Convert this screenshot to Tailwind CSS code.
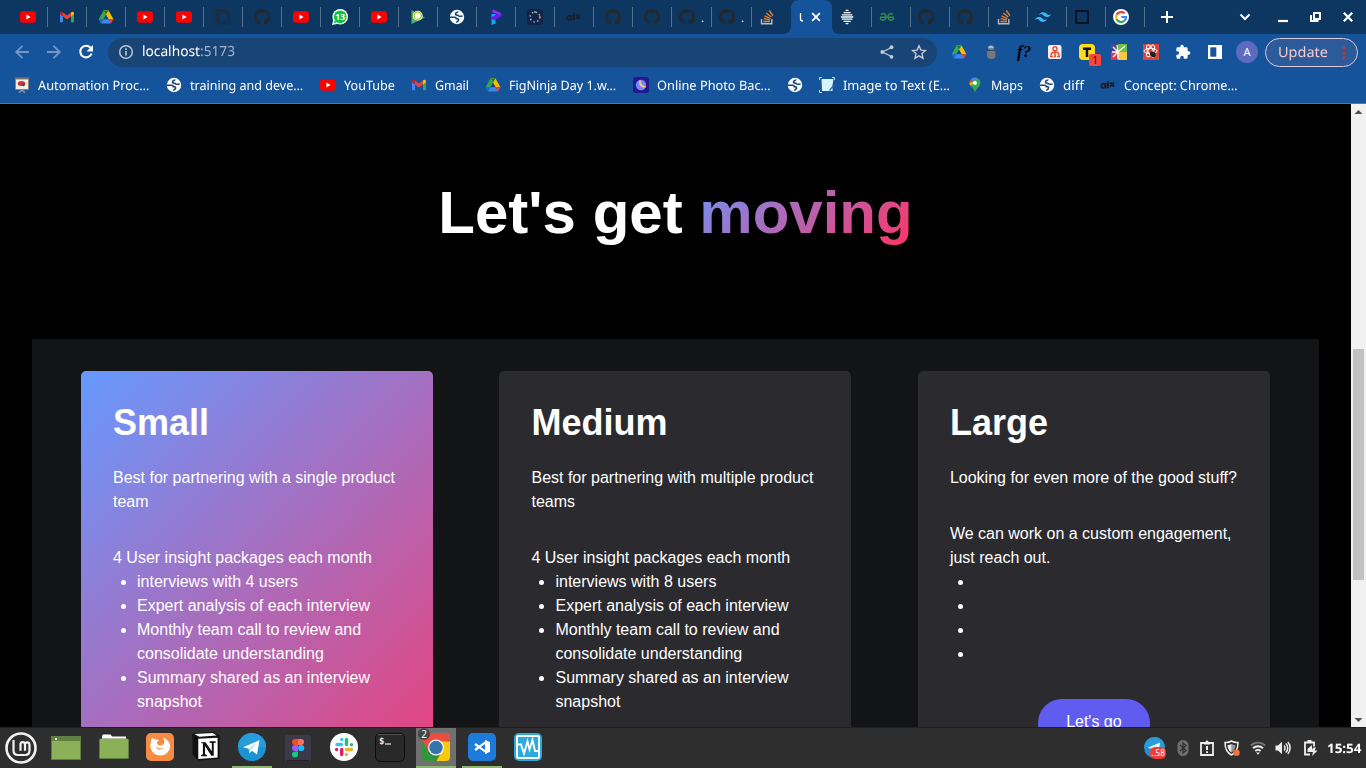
<!DOCTYPE html>
<html lang="en">
<head>
<meta charset="utf-8">
<title>Desktop</title>
<script src="https://cdn.jsdelivr.net/npm/@tailwindcss/browser@4"></script>
</head>
<body class="w-[1366px] h-[768px] overflow-hidden bg-black text-white font-['Liberation_Sans',Arial,sans-serif]">

<svg class="hidden">
  <symbol id="yt" viewBox="0 0 16 16"><rect y="2.2" width="16" height="11.6" rx="3" fill="#f00"/><path d="M6.4 5.6v4.8L10.6 8z" fill="#fff"/></symbol>
  <symbol id="gmail" viewBox="0 0 16 16"><path d="M1 4.500v8.300h3V7z" fill="#4285f4"/><path d="M1 12.800V4h3v9.300H1.500a.5.5 0 0 1-.5-.5z" fill="#4285f4"/><path d="M12 13.300h2.500a.5.5 0 0 0 .5-.5V4h-3z" fill="#34a853"/><path d="M4 3.500l4 3 4-3v4L8 10.500l-4-3z" fill="#ea4335"/><path d="M1 4.300c0-1.700 1.700-2 3-.8v4L1 5.300z" fill="#c5221f"/><path d="M15 4.300c0-1.700-1.700-2-3-.8v4l3-2.200z" fill="#fbbc04"/></symbol>
  <symbol id="drive" viewBox="0 0 16 16"><path d="M5.500 1.500h5L5.600 10 3 14.200.7 10.200z" fill="#34a853"/><path d="M5.500 1.500h5l5 8.700h-5z" fill="#fbbc04"/><path d="M5.500 1.500h5L8 5.700z" fill="#188038"/><path d="M.7 10.200h4.900L3 14.500z" fill="#1967d2"/><path d="M5.600 10.200h5l2.400 4.300H3z" fill="#4285f4"/><path d="M10.600 10.200h4.900L13 14.500z" fill="#ea4335"/><path d="M8 5.800l2.500 4.300h-5z" fill="#14467e"/></symbol>
  <symbol id="gh" viewBox="0 0 16 16"><path fill="#24292f" d="M8 0C3.580 0 0 3.580 0 8c0 3.540 2.290 6.530 5.470 7.590.4.070.550-.170.550-.380 0-.190-.010-.820-.010-1.490-2.010.370-2.530-.490-2.690-.940-.090-.230-.480-.940-.820-1.130-.280-.150-.680-.520-.010-.530.630-.010 1.080.580 1.230.820.720 1.210 1.870.870 2.330.660.070-.520.280-.870.510-1.070-1.780-.200-3.640-.890-3.640-3.950 0-.870.310-1.590.820-2.150-.080-.200-.360-1.020.080-2.120 0 0 .670-.210 2.200.820.640-.180 1.320-.270 2-.270s1.360.090 2 .270c1.530-1.040 2.200-.820 2.200-.820.440 1.100.160 1.920.080 2.120.510.560.820 1.270.820 2.150 0 3.070-1.870 3.750-3.650 3.950.290.250.540.730.540 1.480 0 1.070-.010 1.930-.010 2.200 0 .210.150.460.550.380A8.010 8.010 0 0 0 16 8c0-4.420-3.580-8-8-8z"/></symbol>
  <symbol id="globe" viewBox="0 0 16 16"><circle cx="8" cy="8" r="7.200" fill="#fff"/><path d="M1 8.200h4.800c1 0 1.500.8 1.500 1.600h1.500c1 .2 1 1.700.2 2.200-1 .3-1.300.8-1.300 1.800M9 2.600c-.3 1-2.600 1-2.600 2.300 0 1.200 1.400 1.300 2.600 1.500.8 1.100 3.200.9 4.600.6" fill="none" stroke="#15457c" stroke-width="1.600"/></symbol>
  <symbol id="so" viewBox="0 0 16 16"><path d="M2.500 10v4.800h10.300V10" fill="none" stroke="#bcbbbb" stroke-width="1.400"/><path d="M4.500 12.500h6.500M4.700 9.700l6.300 1.200M5.500 6.800l5.900 2.700M7.300 4l5 4.100M10.200 1.500l3.800 5.200" stroke="#f48024" stroke-width="1.300" fill="none"/></symbol>
  <symbol id="box" viewBox="0 0 16 16"><path d="M1.500 1.500h11l2 2v11h-11l-2-2z" fill="none" stroke="#222a35" stroke-width="1.500"/><path d="M4 4h8.500v8.500H4z" fill="#0d3660" stroke="#222a35" stroke-width="1.200"/></symbol>
  <symbol id="tg" viewBox="0 0 28 28"><circle cx="14" cy="14" r="14" fill="#1c94d2"/><path d="M0 14a14 14 0 0 1 28 0z" fill="#289ddb"/><path d="M5 14.200L21.500 7.300 19 21.500l-5-3.700-2.500 2.400-.8-4.500z" fill="#fff"/><path d="M10.700 15.700L19 9.600l-6 7-1.500 3.600z" fill="#b7d8ec"/></symbol>
</svg>

<div class="flex flex-col w-full h-full">

  <!-- tab strip -->
  <div class="flex h-[34px] shrink-0 bg-[#0d3660] pl-[9px] items-center font-['Noto_Sans',sans-serif]">
    <div class="flex w-[39px] h-5 items-center justify-center border-r border-[#56728f]"><svg class="size-4"><use href="#yt"/></svg></div>
    <div class="flex w-[39px] h-5 items-center justify-center border-r border-[#56728f]"><svg class="size-4"><use href="#gmail"/></svg></div>
    <div class="flex w-[39px] h-5 items-center justify-center border-r border-[#56728f]"><svg class="size-4"><use href="#drive"/></svg></div>
    <div class="flex w-[39px] h-5 items-center justify-center border-r border-[#56728f]"><svg class="size-4"><use href="#yt"/></svg></div>
    <div class="flex w-[39px] h-5 items-center justify-center border-r border-[#56728f]"><svg class="size-4"><use href="#yt"/></svg></div>
    <div class="flex w-[39px] h-5 items-center justify-center border-r border-[#56728f]"><svg class="size-4"><use href="#box"/></svg></div>
    <div class="flex w-[39px] h-5 items-center justify-center border-r border-[#56728f]"><svg class="size-4"><use href="#gh"/></svg></div>
    <div class="flex w-[39px] h-5 items-center justify-center border-r border-[#56728f]"><svg class="size-4"><use href="#yt"/></svg></div>
    <div class="flex w-[39px] h-5 items-center justify-center border-r border-[#56728f]">
      <svg class="size-4" viewBox="0 0 16 16"><circle cx="8.200" cy="7.800" r="7.800" fill="#fff"/><path d="M0 16l1.500-6 4.500 4.800z" fill="#fff"/><circle cx="8.200" cy="7.800" r="6.400" fill="#09c53f"/><path d="M1.700 14.300l.9-3 2.200 2.200z" fill="#09c53f"/><text x="8.200" y="11" text-anchor="middle" font-size="8.500" font-weight="700" fill="#fff">13</text></svg></div>
    <div class="flex w-[39px] h-5 items-center justify-center border-r border-[#56728f]"><svg class="size-4"><use href="#yt"/></svg></div>
    <div class="flex w-[39px] h-5 items-center justify-center border-r border-[#56728f]">
      <svg class="size-4" viewBox="0 0 16 16"><path d="M1.500 1l13.500 7.500L1.500 15z" fill="#4fae74"/><path d="M1.500 15l6-3.200L15 8.500z" fill="#1e8c50"/><circle cx="7.700" cy="6.700" r="3.600" fill="#7db53c" stroke="#fff" stroke-width="2.600"/><circle cx="7.700" cy="6.700" r="3.600" fill="#fff" stroke="#b4cf2b" stroke-width="1.500"/></svg></div>
    <div class="flex w-[39px] h-5 items-center justify-center border-r border-[#56728f]"><svg class="size-4"><use href="#globe"/></svg></div>
    <div class="flex w-[39px] h-5 items-center justify-center border-r border-[#56728f]">
      <svg class="size-4" viewBox="0 0 16 16"><path d="M3.500 5h4v9.500l-4 1.500z" fill="#12a6ef"/><path d="M5 .5l8.500 3.700v3L5 11.500 3.500 8l5.500-2.500L4 3.300z" fill="#6a1cf0"/><path d="M5 .5l8.500 3.700-2 1.600L4 3.300z" fill="#8a2df5"/></svg></div>
    <div class="flex w-[39px] h-5 items-center justify-center border-r border-[#56728f]">
      <svg class="size-4" viewBox="0 0 16 16"><rect width="16" height="16" rx="3" fill="#14234b"/><circle cx="8" cy="8" r="4.900" fill="none" stroke="#a9b9cd" stroke-width="1.500" stroke-dasharray="1.500 2.350"/><circle cx="8" cy="3" r="1" fill="#7bbf3b"/><circle cx="12.800" cy="8" r="1" fill="#e48544"/></svg></div>
    <div class="flex w-[39px] h-5 items-center justify-center border-r border-[#56728f]">
      <svg class="size-4" viewBox="0 0 16 16"><path d="M5.500 6v5.300M8 4v7.300M10 5.500l4 4M14 5.500L10 9.500" stroke="#1b2028" stroke-width="1.900" fill="none"/><circle cx="3.300" cy="8.800" r="2" stroke="#1b2028" stroke-width="1.700" fill="none"/></svg></div>
    <div class="flex w-[39px] h-5 items-center justify-center border-r border-[#56728f]"><svg class="size-4"><use href="#gh"/></svg></div>
    <div class="flex w-[39px] h-5 items-center justify-center border-r border-[#56728f]"><svg class="size-4"><use href="#gh"/></svg></div>
    <div class="flex w-10 h-5 items-center pl-[7px] gap-[6px] border-r border-[#56728f]"><svg class="size-4"><use href="#gh"/></svg><span class="text-[11px] leading-5 pt-0.5">.</span></div>
    <div class="flex w-10 h-5 items-center pl-[7px] gap-[6px] border-r border-[#56728f]"><svg class="size-4"><use href="#gh"/></svg><span class="text-[11px] leading-5 pt-0.5">.</span></div>
    <div class="flex w-[31px] h-5 items-center pl-[7px]"><svg class="size-4"><use href="#so"/></svg></div>
    <div class="flex w-[57px] h-[34px]">
      <svg class="w-[57px] h-[34px]" viewBox="0 0 57 34"><path d="M0 34c5 0 8-3 8-8V8c0-5 3-8 8-8h25c5 0 8 3 8 8v18c0 5 3 8 8 8z" fill="#15539a"/><path d="M17.500 13v6c0 1.500.8 2 2.500 2" stroke="#fff" stroke-width="1.300" fill="none"/><path d="M29.200 13.200l7.600 7.600M36.800 13.200l-7.600 7.600" stroke="#fff" stroke-width="1.900"/></svg>
    </div>
    <div class="flex w-8 h-5 items-center border-r border-[#56728f]">
      <svg class="w-[15px] h-4" viewBox="0 0 16 16"><path d="M6.500 1h2M4.300 3.300h6.500M2.500 5.700h10.200M1.500 8h12.200M2.500 10.300h10.200M4.300 12.700h6.500M6.500 15h2" stroke="#fff" stroke-width="1.400" stroke-linecap="round"/></svg></div>
    <div class="flex w-[39px] h-5 items-center pl-[7px] border-r border-[#56728f]">
      <svg class="size-4" viewBox="0 0 16 16"><path d="M1 8.200h14M2.200 5.500c2-2.300 5 0 4.800 2.500-.2 4-5 4.300-5.800.8M13.800 5.500c-2-2.300-5 0-4.800 2.500.2 4 5 4.300 5.800.8" stroke="#2f8d46" stroke-width="1.400" fill="none"/></svg></div>
    <div class="flex w-[39px] h-5 items-center pl-[7px] border-r border-[#56728f]"><svg class="size-4"><use href="#gh"/></svg></div>
    <div class="flex w-[39px] h-5 items-center pl-[7px] border-r border-[#56728f]"><svg class="size-4"><use href="#gh"/></svg></div>
    <div class="flex w-[39px] h-5 items-center pl-[7px] border-r border-[#56728f]"><svg class="size-4"><use href="#so"/></svg></div>
    <div class="flex w-[39px] h-5 items-center pl-[7px] border-r border-[#56728f]">
      <svg class="size-4" viewBox="0 0 24 24"><path fill="#38bdf8" d="M12 4.800c-3.200 0-5.200 1.600-6 4.800 1.200-1.600 2.600-2.200 4.200-1.800.9.200 1.600.9 2.300 1.700 1.200 1.200 2.600 2.500 5.500 2.500 3.200 0 5.200-1.600 6-4.800-1.200 1.600-2.600 2.200-4.200 1.800-.9-.2-1.600-.9-2.300-1.700C16.300 6.100 14.900 4.800 12 4.800zM6 12c-3.200 0-5.200 1.600-6 4.800 1.200-1.600 2.600-2.200 4.200-1.800.9.200 1.600.9 2.300 1.700 1.200 1.200 2.600 2.500 5.500 2.500 3.200 0 5.200-1.600 6-4.800-1.200 1.600-2.600 2.200-4.200 1.800-.9-.2-1.600-.9-2.300-1.700C10.300 13.300 8.900 12 6 12z"/></svg></div>
    <div class="flex w-[39px] h-5 items-center pl-[7px] border-r border-[#56728f]">
      <svg class="size-4" viewBox="0 0 16 16"><rect x="2" y="2" width="12" height="12" fill="none" stroke="#030a12" stroke-width="1.500"/></svg></div>
    <div class="flex w-[39px] h-5 items-center pl-[7px] border-r border-[#56728f]">
      <svg class="size-4" viewBox="0 0 16 16"><circle cx="8" cy="8" r="8" fill="#fff"/><g fill="none" stroke-width="2.200"><path d="M11.600 4.400A5 5 0 0 0 3.600 5.800" stroke="#ea4335"/><path d="M3.700 5.700a5 5 0 0 0 0 4.700" stroke="#fbbc05"/><path d="M3.600 10.300a5 5 0 0 0 7.600 1.600" stroke="#34a853"/><path d="M11.100 12A5 5 0 0 0 13 8H8.300" stroke="#4285f4"/></g></svg></div>
    <svg class="w-[221px] h-[34px]" viewBox="0 0 221 34"><g stroke="#fff" fill="none"><path d="M22 11v12M16 17h12" stroke-width="2"/><path d="M95.500 14.500l4.500 4.500 4.500-4.500" stroke-width="2"/><path d="M133 21h10" stroke-width="2.200"/><rect x="169" y="13" width="6" height="6" stroke-width="2"/><path d="M166 15v6h7.500" stroke-width="2"/><path d="M198.800 12.800l8.400 8.400M207.200 12.800l-8.400 8.400" stroke-width="2.200"/></g></svg>
  </div>

  <!-- toolbar -->
  <div class="flex h-[37px] shrink-0 bg-[#15539a] items-center font-['Noto_Sans',sans-serif]">
    <svg class="w-[108px] h-[37px] shrink-0" viewBox="0 0 108 37"><g fill="none" stroke-width="1.800"><path d="M29 18H16.500M22.500 11.800L16.200 18l6.300 6.200M47 18h12.500M53.500 11.800L59.800 18l-6.300 6.200" stroke="#7299c4"/><path d="M90.500 13.800A5.800 5.800 0 1 0 91.600 19.500" stroke="#fff" stroke-width="2.100"/></g><path d="M93 11v6.500h-6.500z" fill="#fff"/></svg>
    <div class="flex w-[829px] h-[29px] rounded-full bg-[#194576] items-center pl-[10px] pr-[10px] pb-px">
      <svg class="size-4 shrink-0" viewBox="0 0 16 16"><circle cx="8" cy="8" r="6.300" fill="none" stroke="#bac5d2" stroke-width="1.500"/><path d="M8 7v4.500M8 4.300v1.600" stroke="#bac5d2" stroke-width="1.600"/></svg>
      <div class="ml-2 text-[14px] leading-5 whitespace-nowrap origin-left scale-x-[.98] [text-rendering:geometricPrecision]">localhost<span class="text-[#a3b5c8]">:5173</span></div>
      <svg class="size-4 ml-auto" viewBox="0 0 16 16"><path d="M12.500 3.500L3.500 8l9 4.500" fill="none" stroke="#c3cbd5" stroke-width="1.300"/><circle cx="12.500" cy="3.200" r="1.900" fill="#c3cbd5"/><circle cx="3.300" cy="8" r="1.900" fill="#c3cbd5"/><circle cx="12.500" cy="12.800" r="1.900" fill="#c3cbd5"/></svg>
      <svg class="size-4 ml-4" viewBox="0 0 16 16"><path d="M8 1.800l1.900 4.300 4.600.4-3.500 3.100 1 4.600L8 11.800l-4 2.400 1-4.600-3.500-3.100 4.600-.4z" fill="none" stroke="#c3cbd5" stroke-width="1.400"/></svg>
    </div>
    <div class="flex items-center gap-4 ml-[14px] pb-px">
      <svg class="size-4"><use href="#drive"/></svg>
      <svg class="size-4" viewBox="0 0 16 16"><path d="M4 5L2.500 3M12 5l1.500-2M3.500 9H1.500M12.500 9h2M4 13l-1.500 1.500M12 13l1.500 1.500" stroke="#34516f"/><rect x="4" y="5" width="8.500" height="10" rx="4" fill="#74797f"/><path d="M5 4.500a3 3 0 0 1 6 0z" fill="#b5b9bd"/><path d="M4 6.500h8.500" stroke="#3f4a57"/></svg>
      <div class="w-4 pl-0.5 text-[17px] leading-4 font-bold italic text-black font-['Liberation_Serif',serif] whitespace-nowrap">f?</div>
      <svg class="size-4" viewBox="0 0 16 16"><rect x="1" y="1" width="13.500" height="14" rx="2" fill="#f5f0ee"/><circle cx="8" cy="4.800" r="2" fill="none" stroke="#e94b35" stroke-width="1.400"/><path d="M8 7v5M4 11.500c0-3 1.500-3.500 4-3.500s4 .5 4 3.500M3 12.500h3M7 12.500h2M10 12.500h3" stroke="#e94b35" stroke-width="1.500" fill="none"/></svg>
      <div class="relative size-4"><svg class="size-4" viewBox="0 0 16 16"><rect width="16" height="16" rx="4" fill="#fddc1c"/><path d="M4 4.700h8M8 4.700V13" stroke="#101010" stroke-width="2.500"/></svg><span class="absolute left-[10px] top-[10px] w-3 h-3 rounded-[2px] bg-[#f9453c] text-[10px] leading-3 text-center text-[#1f1010]">1</span></div>
      <svg class="size-4" viewBox="0 0 16 16"><path d="M0 0h7v8H0z" fill="#583e91"/><path d="M7 0h9v8H7z" fill="#70be44"/><path d="M0 8h7v8H0z" fill="#e0345a"/><path d="M7 8h9v8H7z" fill="#f6c945"/><path d="M7 8L2 3M7 8L6 1M7 8l7-6M7 8H1M7 8l-5 5M7 8v7" stroke="#fff" stroke-width="1.300"/></svg>
      <svg class="size-4" viewBox="0 0 16 16"><rect width="16" height="16" fill="#d8453b"/><g fill="none" stroke="#fff" stroke-width="1"><ellipse cx="7.500" cy="7" rx="6.500" ry="2.600"/><ellipse cx="7.500" cy="7" rx="6.500" ry="2.600" transform="rotate(60 7.500 7)"/><ellipse cx="7.500" cy="7" rx="6.500" ry="2.600" transform="rotate(120 7.500 7)"/></g><path d="M7 8.500l2-1 2.500.5 1.500 2.500-1 2.500H9l-2-1.800z" fill="#222"/></svg>
      <svg class="size-4" viewBox="0 0 24 24"><path fill="#fff" d="M20.500 11H19V7a2 2 0 0 0-2-2h-4V3.500a2.500 2.500 0 0 0-5 0V5H4a2 2 0 0 0-2 2v3.800h1.500a2.700 2.700 0 0 1 0 5.400H2V20a2 2 0 0 0 2 2h3.800v-1.500a2.700 2.700 0 0 1 5.400 0V22H17a2 2 0 0 0 2-2v-4h1.500a2.500 2.500 0 0 0 0-5z"/></svg>
      <svg class="size-4" viewBox="0 0 16 16"><rect x="1" y="1" width="14" height="14" fill="#fff"/><path d="M3.300 3.300h6v9.400h-6z" fill="#15539a"/></svg>
    </div>
    <div class="ml-[13px] mb-px size-[22px] rounded-full bg-[#5c6bc0] text-[11px] leading-[22px] text-center">A</div>
    <div class="flex ml-[7px] w-[93px] h-[29px] rounded-full border border-[#dcc9d6] bg-[#2b5b9b] items-center pl-3">
      <div class="w-[50px] text-[14px] leading-5 text-[#f6c9c8] whitespace-nowrap origin-left scale-x-[1.035] [text-rendering:geometricPrecision]">Update</div>
      <svg class="w-1 h-4 ml-[14px]" viewBox="0 0 4 16"><g fill="#d93025"><circle cx="2" cy="3" r="1.500"/><circle cx="2" cy="8" r="1.500"/><circle cx="2" cy="13" r="1.500"/></g></svg>
    </div>
  </div>

  <!-- bookmarks -->
  <div class="flex h-[33px] shrink-0 bg-[#15539a] border-b border-[#4779b0] items-center pl-[14px] pb-1 gap-4 text-[13px] leading-5 whitespace-nowrap font-['Noto_Sans',sans-serif] [text-rendering:geometricPrecision]">
    <div class="flex gap-2 items-center"><svg class="size-4" viewBox="0 0 16 16"><path d="M8 13l-3 2.800M8 13l3 2.800" stroke="#a39a8e" stroke-width="1.300"/><path d="M.5 1h15" stroke="#665f5c" stroke-width="2"/><rect x="1.500" y="2" width="13" height="10.500" fill="#f2efed" stroke="#8d837b"/><ellipse cx="7.500" cy="6.500" rx="3.800" ry="2.500" fill="#d53333"/><path d="M7.500 6.500l4 1-2 2z" fill="#444"/></svg><div class="w-28 origin-left scale-x-[.985]">Automation Proc…</div></div>
    <div class="flex gap-2 items-center"><svg class="size-4"><use href="#globe"/></svg><div class="w-[114px] origin-left scale-x-[.966]">training and deve…</div></div>
    <div class="flex gap-2 items-center"><svg class="size-4"><use href="#yt"/></svg><div class="w-[51px] origin-left scale-x-[.97]">YouTube</div></div>
    <div class="flex gap-2 items-center"><svg class="size-4"><use href="#gmail"/></svg><div class="w-[34px] origin-left scale-x-[.955]">Gmail</div></div>
    <div class="flex gap-2 items-center"><svg class="size-4"><use href="#drive"/></svg><div class="w-[108px] origin-left scale-x-[.965]">FigNinja Day 1.w…</div></div>
    <div class="flex gap-2 items-center"><svg class="size-4" viewBox="0 0 16 16"><rect width="16" height="16" rx="3" fill="#23198e"/><circle cx="8" cy="8" r="5.200" fill="#7a86f5"/><path d="M7 3.500c0 3 2 5.500 5.500 6.500C9 10.800 5.500 8 7 3.500z" fill="#ffcf7a" stroke="#ffcf7a"/></svg><div class="w-[114px] origin-left scale-x-[.983]">Online Photo Bac…</div></div>
    <svg class="size-4"><use href="#globe"/></svg>
    <div class="flex gap-2 items-center"><svg class="size-4" viewBox="0 0 16 16"><path d="M.5 3V.5H3M13 .5h2.500V3M.5 13v2.500H3" stroke="#b9d9f4" fill="none"/><path d="M2.500 2H14.500L13.500 8v6H3z" fill="#d7f3fd"/><path d="M10 13l4.500-5.500 1 1L11 14z" fill="#1e6fb8"/></svg><div class="w-[108px] origin-left scale-x-[.988]">Image to Text (E…</div></div>
    <div class="flex gap-2 items-center"><svg class="size-4" viewBox="0 0 16 16"><path d="M8 .5a5.500 5.500 0 0 0-5.500 5.700C2.700 9.500 7 11 8 15.500 9 11 13.300 9.500 13.500 6.200A5.500 5.500 0 0 0 8 .5z" fill="#34a853"/><path d="M8 .5a5.500 5.500 0 0 0-4.300 2L6.300 4.800 10 .9A5 5 0 0 0 8 .5z" fill="#4285f4"/><path d="M3.700 2.500a5.500 5.500 0 0 0-1.200 3.400L6.200 4.700z" fill="#ea4335"/><path d="M2.500 6c.1 1 .5 2 1.200 2.800L9.500 2.500 6.200 4.700z" fill="#fbbc04"/><circle cx="8" cy="6" r="2" fill="#fff"/></svg><div class="w-8 origin-left scale-x-[.96]">Maps</div></div>
    <div class="flex gap-2 items-center"><svg class="size-4"><use href="#globe"/></svg><div class="w-[21px] origin-left scale-x-[1.03]">diff</div></div>
    <div class="flex gap-2 items-center"><svg class="size-4" viewBox="0 0 16 16"><path d="M5.500 6v5.300M8 4v7.300M10 5.500l4 4M14 5.500L10 9.500" stroke="#1b2028" stroke-width="1.900" fill="none"/><circle cx="3.300" cy="8.800" r="2" stroke="#1b2028" stroke-width="1.700" fill="none"/></svg><div class="w-[114px] origin-left scale-x-[.976]">Concept: Chrome…</div></div>
  </div>

  <!-- page -->
  <div class="flex h-[623px] shrink-0 overflow-hidden">
    <main class="flex-1 h-full overflow-hidden pl-8 pr-8 pt-[79px]">
      <h1 class="text-center text-6xl font-bold">Let's get <span class="bg-[linear-gradient(135deg,#6699ff_-6%,#ff3366_100%)] bg-clip-text text-transparent">moving</span></h1>
      <div class="mt-[96px] flex justify-between bg-[#131416] pt-8 pl-[49px] pr-[49.1px] h-[600px]">
        <section class="w-[352px] h-[517px] rounded-[5px] p-8 bg-[linear-gradient(135deg,#6699ff,#ff3366)]">
          <h2 class="text-4xl font-bold">Small</h2>
          <p class="mt-[23px]">Best for partnering with a single product team</p>
          <p class="mt-8">4 User insight packages each month</p>
          <ul class="list-disc pl-6">
            <li>interviews with 4 users</li>
            <li>Expert analysis of each interview</li>
            <li>Monthly team call to review and consolidate understanding</li>
            <li>Summary shared as an interview snapshot</li>
          </ul>
        </section>
        <section class="w-[352px] h-[517px] rounded-[5px] p-8 bg-[#2b2a2f]">
          <h2 class="text-4xl font-bold">Medium</h2>
          <p class="mt-[23px]">Best for partnering with multiple product teams</p>
          <p class="mt-8">4 User insight packages each month</p>
          <ul class="list-disc pl-6">
            <li>interviews with 8 users</li>
            <li>Expert analysis of each interview</li>
            <li>Monthly team call to review and consolidate understanding</li>
            <li>Summary shared as an interview snapshot</li>
          </ul>
        </section>
        <section class="w-[352px] h-[517px] rounded-[5px] p-8 bg-[#2b2a2f]">
          <h2 class="text-4xl font-bold">Large</h2>
          <p class="mt-[23px] whitespace-nowrap">Looking for even more of the good stuff?</p>
          <p class="mt-8">We can work on a custom engagement, just reach out.</p>
          <ul class="list-disc pl-6">
            <li class="h-6"></li><li class="h-6"></li><li class="h-6"></li><li class="h-6"></li>
          </ul>
          <button class="block mx-auto mt-[33px] w-28 pt-[11px] pb-[13px] h-[48px] rounded-full bg-[#605cf0]">Let's go</button>
        </section>
      </div>
    </main>
    <div class="flex flex-col w-[15px] h-full bg-[#f1f1f1] items-center">
      <svg class="w-[15px] h-[15px]" viewBox="0 0 15 15"><path d="M3.500 10h8l-4-4z" fill="#505050"/></svg>
      <div class="mt-[230px] w-[11px] h-[231px] bg-[#c1c1c1]"></div>
      <svg class="w-[15px] h-[15px] mt-auto" viewBox="0 0 15 15"><path d="M3.500 6h8l-4 4z" fill="#505050"/></svg>
    </div>
  </div>

  <!-- desktop panel -->
  <div class="flex h-[41px] shrink-0 bg-[#2e2e2e] border-t border-[#1f1f1f]">
    <div class="flex w-[46px] items-center pl-[5px]"><svg class="size-8" viewBox="0 0 32 32"><circle cx="16" cy="16" r="14.500" fill="none" stroke="#f2f2f2" stroke-width="2.600"/><path d="M8.500 8v10.500c0 3 1.500 4.500 4.500 4.500h7c3 0 4.500-1.500 4.500-4.500V13c0-3.500-4.500-3.500-4.500-.5v6.300M20 12.500c0-3.300-4.500-3.300-4.500 0v6.300" fill="none" stroke="#f2f2f2" stroke-width="2.200"/></svg></div>
    <div class="flex w-10 items-center justify-center"><svg class="w-[30px] h-6" viewBox="0 0 30 24"><path d="M0 0h30v24H0z" fill="#5f8040"/><path d="M1 5h28v18H1z" fill="#8bb158"/><path d="M4 2h2v2H4z" fill="#fff"/></svg></div>
    <div class="flex w-10 ml-2 items-center justify-center"><svg class="w-[30px] h-[26px] mb-0.5" viewBox="0 0 30 26"><path d="M3 5V2l1-1.500h7.500L13 2.500h14V6H3z" fill="#fff"/><rect y="4.500" width="30" height="20.500" rx="1.500" fill="#5f8040"/><rect x="1" y="5" width="28" height="19" rx="1" fill="#8bb158"/></svg></div>
    <div class="flex w-10 ml-1.5 items-center justify-center"><svg class="size-7 mb-0.5" viewBox="0 0 28 28"><rect width="28" height="28" rx="5" fill="#f88c43"/><path d="M5 9c0-2 .5-3.500 1.300-4.500.4 1 1.500 1.800 3 1.800 2 .1 3 .8 3.600 1.700-1.700.1-2.300 1.200-1.700 2.700.8 2 4 2.500 6 .8 2-2 1.500-5-1-7 5 1 8 5 8 9.500A10 10 0 0 1 4.400 14C4.200 12 4.500 10.500 5 9z" fill="#fff"/><path d="M10 13c1 2.500 5 3.200 7.500 1.500-1 3-7.500 3-7.500-1.500z" fill="#f88c43"/></svg></div>
    <div class="flex w-10 ml-1.5 items-center justify-center"><svg class="w-7 h-[29px] mb-1" viewBox="0 0 28 30"><path d="M0 1.500L22 0l6 4v24L6 29.500 0 23z" fill="#111"/><path d="M2 2l19-1 4 2.500L7 5z" fill="#fff"/><path d="M6 7l20-1v20.500L6 28z" fill="#fff"/><path d="M9 10.500h4.500L20 20v-8.500l-2.300-.5V9.500H24V11l-2 .5v13h-2.500L13 14.500V23l2 .7V25H9v-1.300l1.800-.7V12L9 11.500z" fill="#111"/></svg></div>
    <div class="flex w-10 ml-1.5 items-center justify-center border-b-2 border-[#8fb573]"><svg class="size-7"><use href="#tg"/></svg></div>
    <div class="flex w-10 ml-1.5 items-center justify-center"><svg class="size-[26px]" viewBox="0 0 26 26"><rect width="26" height="26" rx="1.500" fill="#3e3948"/><path d="M13 4h-3a3 3 0 0 0 0 6h3z" fill="#f24e1e"/><path d="M13 4h3a3 3 0 0 1 0 6h-3z" fill="#ff7262"/><path d="M13 10h-3a3 3 0 0 0 0 6h3z" fill="#a259ff"/><circle cx="16.200" cy="13" r="3.100" fill="#1abcfe"/><path d="M13 16.500h-3a3 3 0 1 0 3 3z" fill="#0acf83"/><path d="M2 25.500h22" stroke="#24212a"/></svg></div>
    <div class="flex w-10 ml-1.5 items-center justify-center"><svg class="size-7 mb-0.5" viewBox="0 0 28 28"><circle cx="14" cy="14" r="14" fill="#fff"/><g stroke-width="3.400" stroke-linecap="round"><path d="M7 11.500h4.500M11.800 6.500v.1" stroke="#36c5f0"/><path d="M16.500 6.500V11.500M21.500 11.700v.1" stroke="#2eb67d"/><path d="M16.500 16.500h5M16.400 21.500v.1" stroke="#ecb22e"/><path d="M11.700 16.500v5M6.600 16.500v.1" stroke="#e01e5a"/></g></svg></div>
    <div class="flex w-10 ml-1.5 items-center justify-center"><svg class="w-[30px] h-[29px] mb-0.5" viewBox="0 0 30 29"><rect x=".5" y=".5" width="29" height="28" rx="4.500" fill="#292929" stroke="#0c0c0c"/><path d="M3 1.500h24" stroke="#555"/><text x="4" y="10.500" font-size="9" font-weight="700" fill="#eee" font-family="DejaVu Sans Mono">$</text><path d="M10 11h6" stroke="#eee" stroke-width="1.200"/></svg></div>
    <div class="relative flex w-10 ml-1.5 items-center justify-center bg-[#707070] border-b-2 border-[#8fb573]"><svg class="w-[30px] h-[29px]" viewBox="0 0 30 29"><defs><clipPath id="cr"><rect x="1" y="0" width="28" height="28" rx="4"/></clipPath></defs><g clip-path="url(#cr)"><path d="M0 0h30v29H0z" fill="#35933d"/><path d="M15 8h15v21H15l6-11z" fill="#fbc80c"/><path d="M0 0h30v8.500H15L8.500 19 0 6z" fill="#e94e40"/></g><circle cx="15" cy="14.500" r="8" fill="#f4f4f4"/><circle cx="15" cy="14.500" r="6.700" fill="#3275ad"/></svg><span class="absolute left-0.5 top-0 size-3 rounded-full bg-[#454545] text-[10px] leading-3 text-center font-['Noto_Sans',sans-serif]">2</span></div>
    <div class="flex w-10 ml-1.5 items-center justify-center border-b-2 border-[#8fb573]"><svg class="size-7" viewBox="0 0 28 28"><rect width="28" height="28" rx="5" fill="#1d7bdc"/><path d="M7 11l10.500 7.500v-9L7 17" fill="none" stroke="#fff" stroke-width="2.400"/><path d="M17 7l5 2.300v9.400L17 21z" fill="#fff"/><path d="M17 11l-4 3 4 3z" fill="#1d7bdc"/></svg></div>
    <div class="flex w-10 ml-1.5 items-center justify-center"><svg class="size-7 mb-0.5" viewBox="0 0 28 28"><rect width="28" height="28" rx="5" fill="#2baadd"/><rect x="3" y="3" width="22" height="22" rx="1.500" fill="none" stroke="#fff" stroke-width="2"/><path d="M3 11.500h4l3 9 3.500-12 2 8 3-9.500 2.500 11h4" fill="none" stroke="#fff" stroke-width="1.900"/></svg></div>

    <div class="flex items-center ml-auto pr-[5px]">
      <div class="relative size-[22px]"><svg class="size-[21px]" viewBox="0 0 28 28"><use href="#tg"/></svg><span class="absolute left-[6px] top-[10px] w-4 h-3 rounded-[5px] bg-[#f23c34] text-[8px] leading-3 text-center font-['Noto_Sans',sans-serif]">..58</span></div>
      <svg class="w-3 h-4 ml-[11px]" viewBox="0 0 12 16"><rect x=".5" width="11" height="16" rx="5.500" fill="#6e6e6e"/><path d="M3 5l6 5.500-3 2.500V3l3 2.500L3 11" fill="none" stroke="#2e2e2e" stroke-width="1.200"/></svg>
      <svg class="size-4 ml-[10px]" viewBox="0 0 16 16"><path d="M2 3h12v12H2z" fill="none" stroke="#eee" stroke-width="1.800"/><path d="M5 4.500V2h1.500C7 0 9 0 9.500 2H11v2.500z" fill="#eee"/><path d="M8 6v4M8 11.300v1.700" stroke="#eee" stroke-width="2"/></svg>
      <svg class="w-[18px] h-4 ml-2" viewBox="0 0 18 16"><path d="M8.500 1c2 1.300 4 1.700 6.500 1.500 0 6-1.500 10-6.500 12.500C3.500 12.500 2 8.500 2 2.500 4.500 2.700 6.500 2.300 8.500 1z" fill="none" stroke="#eee" stroke-width="1.500"/><path d="M8.500 4c1.500.8 2.500 1 4 1-.2 3.500-1.500 6-4 7.500z" fill="#999"/><path d="M8.500 4c-1.500.8-2.500 1-4 1 .2 3.500 1.500 6 4 7.500z" fill="#eee"/><circle cx="13.500" cy="12.800" r="3.200" fill="#f0743a"/></svg>
      <svg class="w-4 h-4 ml-[9px]" viewBox="0 0 16 16"><g fill="none" stroke-width="1.900"><path d="M.8 5.500a10.500 10.500 0 0 1 14.400 0" stroke="#777"/><path d="M3 8.300a7.300 7.300 0 0 1 10 0M5.300 11a4 4 0 0 1 5.400 0" stroke="#eee"/></g><path d="M6 12.500h4l-2 2.300z" fill="#eee"/></svg>
      <svg class="size-4 ml-[9px]" viewBox="0 0 16 16"><path d="M.5 5.500H3L7 1.800v12.400L3 10.500H.5z" fill="#eee"/><path d="M9 5.500a3.500 3.500 0 0 1 0 5M10.800 3.500a6.200 6.200 0 0 1 0 9M12.800 2a9 9 0 0 1 0 12" fill="none" stroke="#eee" stroke-width="1.500"/></svg>
      <svg class="w-[15px] h-4 ml-3" viewBox="0 0 15 16"><path d="M7 14.500H2V2.500h9v4" fill="none" stroke="#eee" stroke-width="1.800"/><path d="M4.500 0h4v2.500h-4zM4.500 12V9L9 5v7z" fill="#eee"/><path d="M10.500 7.500L7 12h3l-1 4 5.500-5.500h-3l1.500-3z" fill="#eee"/></svg>
      <div class="ml-[9px] w-[34px] text-[13px] leading-5 font-bold whitespace-nowrap origin-left scale-x-[1.03] font-['Noto_Sans',sans-serif] [text-rendering:geometricPrecision]">15:54</div>
    </div>
  </div>
</div>
</body>
</html>
